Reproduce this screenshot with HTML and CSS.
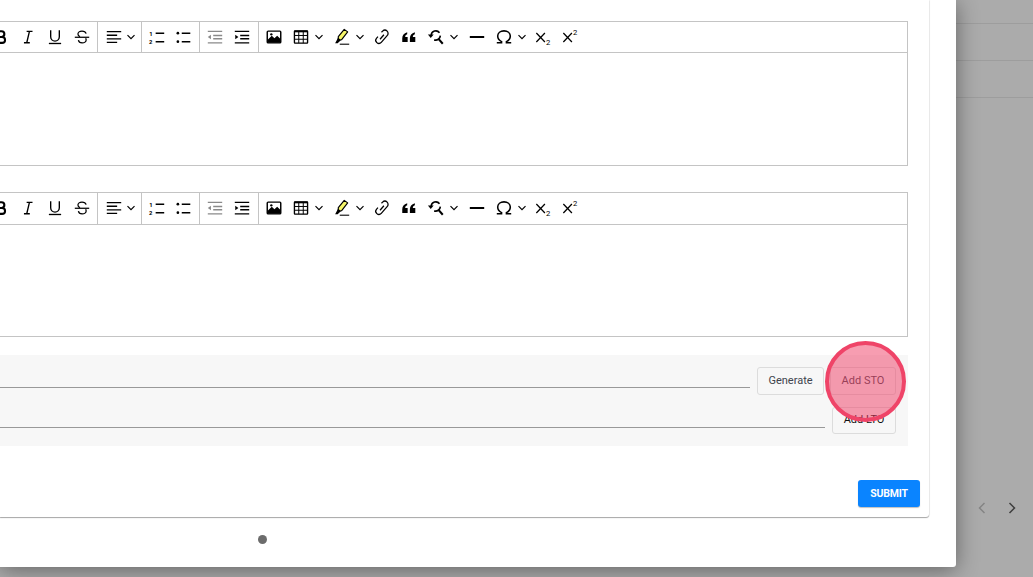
FILE: index.html
```html
<!DOCTYPE html>
<html>

<head>
	<title>Add Goals</title>
	<link rel="stylesheet" href="styles.css">
</head>

<body>
	<!-- icon sprite, both toolbars use it -->
	<svg class="sprite">
		<symbol id="i-bold" viewBox="0 0 20 20"><path d="M6 3.600h4.600a3.100 3.100 0 0 1 0 6.300H6m0 0h5.200a3.300 3.300 0 0 1 0 6.600H6z" fill="none" stroke="currentColor" stroke-width="2.300"/></symbol>
		<symbol id="i-italic" viewBox="0 0 20 20"><path d="M8.500 3.700h6.500M5.500 16.400H12M11.600 3.700L8.600 16.400" fill="none" stroke="currentColor" stroke-width="1.500"/></symbol>
		<symbol id="i-underline" viewBox="0 0 20 20"><path d="M5.200 2.600v7.200a4.800 4.800 0 0 0 9.600 0V2.600" fill="none" stroke="currentColor" stroke-width="1.500"/><path d="M3.200 17.200h13.600" stroke="currentColor" stroke-width="1.500"/></symbol>
		<symbol id="i-strike" viewBox="0 0 20 20"><path d="M14.600 6.300C14 4.300 12.200 3.500 10 3.500c-2.700 0-4.500 1.300-4.500 3.200 0 1.300.8 2.300 2.300 2.900M6 13.400c.4 2 2 3.100 4.100 3.100 2.700 0 4.500-1.300 4.500-3.300 0-.7-.2-1.300-.6-1.800" fill="none" stroke="currentColor" stroke-width="1.400"/><path d="M2 10.300h16" stroke="currentColor" stroke-width="1.400"/></symbol>
		<symbol id="i-align" viewBox="0 0 20 20"><path d="M2 4h16M2 8h11.500M2 12h16M2 16h11.500" stroke="currentColor" stroke-width="1.500"/></symbol>
		<symbol id="i-ol" viewBox="0 0 20 20"><path d="M8.500 5.800h9.500M8.500 15.200h9.500" stroke="currentColor" stroke-width="1.600"/><text x="1.500" y="8.500" class="num">1</text><text x="1.200" y="17.800" class="num">2</text></symbol>
		<symbol id="i-ul" viewBox="0 0 20 20"><path d="M7.500 5.800h9.500M7.500 15.200h9.500" stroke="currentColor" stroke-width="1.600"/><circle cx="3.200" cy="5.800" r="1.500" fill="currentColor"/><circle cx="3.200" cy="15.200" r="1.500" fill="currentColor"/></symbol>
		<symbol id="i-outdent" viewBox="0 0 20 20"><path d="M2 3.700h16M8 8.300h10M8 11.900h10M2 16.500h16" stroke="currentColor" stroke-width="1.500"/><path d="M2 10l3.500-2.400v4.800z" fill="currentColor"/></symbol>
		<symbol id="i-indent" viewBox="0 0 20 20"><path d="M2 3.700h16M8 8.300h10M8 11.900h10M2 16.500h16" stroke="currentColor" stroke-width="1.500"/><path d="M6 10L2.500 7.600v4.800z" fill="currentColor"/></symbol>
		<symbol id="i-image" viewBox="0 0 20 20"><rect x="2.500" y="3.500" width="15" height="13" rx="1" fill="none" stroke="currentColor" stroke-width="1.600"/><path d="M3 16.500v-3.500l4.500-4.500 3 3 3-3 3.500 3.500v4.500z" fill="currentColor"/><circle cx="7" cy="7" r="1.300" fill="currentColor"/></symbol>
		<symbol id="i-table" viewBox="0 0 20 20"><rect x="2.700" y="3.200" width="14.600" height="13.600" rx=".6" fill="none" stroke="currentColor" stroke-width="1.500"/><path d="M2.700 3.800h14.600" stroke="currentColor" stroke-width="2"/><path d="M2.700 8.300h14.600M2.700 12.500h14.600M7.500 4v12.800M12.500 4v12.800" stroke="currentColor" stroke-width="1.100"/></symbol>
		<symbol id="i-pen" viewBox="0 0 20 20"><path d="M12.500 1.500l3.800 2.800-6.900 8.800-3.600.3.100-3.700z" fill="#f6f66a" stroke="currentColor" stroke-width="1.300" stroke-linejoin="round"/><path d="M5.600 10.800l3.300 2.600-3.700 3.600H2.400z" fill="currentColor"/><path d="M7.500 18h10.500" stroke="currentColor" stroke-width="1.200"/></symbol>
		<symbol id="i-link" viewBox="0 0 20 20"><path d="M9.400 4.800l1.300-1.300a3.500 3.500 0 0 1 5 5l-6.500 7.500a3.500 3.500 0 0 1-5.200-4.700l1.500-1.800" fill="none" stroke="currentColor" stroke-width="1.400"/><path d="M7.800 12.500l4.300-5" stroke="currentColor" stroke-width="1.400"/></symbol>
		<symbol id="i-quote" viewBox="0 0 20 20"><path d="M2.500 15.500V11.300C2.500 8 4.300 5.700 8 4.700v2.300C6.500 7.700 5.800 8.600 5.800 10h2.700v5.500zM11 15.500V11.300c0-3.300 1.800-5.600 5.500-6.600V7C15 7.700 14.300 8.600 14.300 10H17v5.500z" fill="currentColor"/></symbol>
		<symbol id="i-find" viewBox="0 0 20 20"><path d="M4.600 8a5.200 5.200 0 0 1 9.300-2.800M14.800 8.500a5.200 5.200 0 0 1-6.800 4.700" fill="none" stroke="currentColor" stroke-width="1.800"/><path d="M13 12.300l4.500 5.200" stroke="currentColor" stroke-width="2.300"/><path d="M1 7.200h6.400l-3.200 3.800z" fill="currentColor"/></symbol>
		<symbol id="i-hr" viewBox="0 0 20 20"><path d="M2 10h16" stroke="currentColor" stroke-width="2.200"/></symbol>
		<symbol id="i-omega" viewBox="0 0 20 20"><path d="M2 16.400h5.300v-1.300C4.500 13.800 3 11.500 3 9c0-3.400 3-5.800 7-5.800s7 2.400 7 5.800c0 2.500-1.500 4.800-4.300 6.100v1.300H18" fill="none" stroke="currentColor" stroke-width="1.700"/></symbol>
		<symbol id="i-sub" viewBox="0 0 20 20"><path d="M1.500 5.500l9.500 10M11 5.500l-9.500 10" stroke="currentColor" stroke-width="1.400"/><text x="12.300" y="19" class="num big">2</text></symbol>
		<symbol id="i-sup" viewBox="0 0 20 20"><path d="M1.500 5.500l9.500 10M11 5.500l-9.500 10" stroke="currentColor" stroke-width="1.400"/><text x="12.300" y="8" class="num big">2</text></symbol>
		<symbol id="i-down" viewBox="0 0 10 10"><path d="M1.500 3.200L5 6.700l3.500-3.500" fill="none" stroke="currentColor" stroke-width="1.200"/></symbol>
	</svg>

	<!-- page behind the dialog -->
	<div class="backdrop">
		<div class="row"></div>
		<div class="row"></div>
		<div class="row"></div>
		<div class="pager">
			<svg class="pager-icon off" viewBox="0 0 10 14"><path d="M7.500 2L2.500 7l5 5" /></svg>
			<svg class="pager-icon" viewBox="0 0 10 14"><path d="M2.500 2l5 5-5 5" /></svg>
		</div>
	</div>

	<div class="modal">
		<div class="card">
			<div class="editor">
				<div class="toolbar">
					<span class="tool"><svg><use href="#i-bold"/></svg></span>
					<span class="tool"><svg><use href="#i-italic"/></svg></span>
					<span class="tool"><svg><use href="#i-underline"/></svg></span>
					<span class="tool"><svg><use href="#i-strike"/></svg></span>
					<span class="sep"></span>
					<span class="tool drop align"><svg><use href="#i-align"/></svg><svg class="chev"><use href="#i-down"/></svg></span>
					<span class="sep"></span>
					<span class="tool"><svg><use href="#i-ol"/></svg></span>
					<span class="tool"><svg><use href="#i-ul"/></svg></span>
					<span class="sep"></span>
					<span class="tool muted"><svg><use href="#i-outdent"/></svg></span>
					<span class="tool"><svg><use href="#i-indent"/></svg></span>
					<span class="sep last"></span>
					<span class="tool"><svg><use href="#i-image"/></svg></span>
					<span class="tool drop"><svg><use href="#i-table"/></svg><svg class="chev"><use href="#i-down"/></svg></span>
					<span class="tool drop"><svg><use href="#i-pen"/></svg><svg class="chev"><use href="#i-down"/></svg></span>
					<span class="tool"><svg><use href="#i-link"/></svg></span>
					<span class="tool"><svg><use href="#i-quote"/></svg></span>
					<span class="tool drop"><svg><use href="#i-find"/></svg><svg class="chev"><use href="#i-down"/></svg></span>
					<span class="tool"><svg><use href="#i-hr"/></svg></span>
					<span class="tool drop"><svg><use href="#i-omega"/></svg><svg class="chev"><use href="#i-down"/></svg></span>
					<span class="tool"><svg><use href="#i-sub"/></svg></span>
					<span class="tool"><svg><use href="#i-sup"/></svg></span>
				</div>
				<div class="editor-body"></div>
			</div>

			<div class="editor second">
				<div class="toolbar">
					<span class="tool"><svg><use href="#i-bold"/></svg></span>
					<span class="tool"><svg><use href="#i-italic"/></svg></span>
					<span class="tool"><svg><use href="#i-underline"/></svg></span>
					<span class="tool"><svg><use href="#i-strike"/></svg></span>
					<span class="sep"></span>
					<span class="tool drop align"><svg><use href="#i-align"/></svg><svg class="chev"><use href="#i-down"/></svg></span>
					<span class="sep"></span>
					<span class="tool"><svg><use href="#i-ol"/></svg></span>
					<span class="tool"><svg><use href="#i-ul"/></svg></span>
					<span class="sep"></span>
					<span class="tool muted"><svg><use href="#i-outdent"/></svg></span>
					<span class="tool"><svg><use href="#i-indent"/></svg></span>
					<span class="sep last"></span>
					<span class="tool"><svg><use href="#i-image"/></svg></span>
					<span class="tool drop"><svg><use href="#i-table"/></svg><svg class="chev"><use href="#i-down"/></svg></span>
					<span class="tool drop"><svg><use href="#i-pen"/></svg><svg class="chev"><use href="#i-down"/></svg></span>
					<span class="tool"><svg><use href="#i-link"/></svg></span>
					<span class="tool"><svg><use href="#i-quote"/></svg></span>
					<span class="tool drop"><svg><use href="#i-find"/></svg><svg class="chev"><use href="#i-down"/></svg></span>
					<span class="tool"><svg><use href="#i-hr"/></svg></span>
					<span class="tool drop"><svg><use href="#i-omega"/></svg><svg class="chev"><use href="#i-down"/></svg></span>
					<span class="tool"><svg><use href="#i-sub"/></svg></span>
					<span class="tool"><svg><use href="#i-sup"/></svg></span>
				</div>
				<div class="editor-body"></div>
			</div>

			<div class="goals">
				<div class="goal-row">
					<div class="goal-input"></div>
					<button class="btn generate">Generate</button>
					<div class="highlight-wrap">
						<button class="btn sto">Add STO</button>
						<div class="click-mark"></div>
					</div>
				</div>
				<div class="goal-row short">
					<div class="goal-input"></div>
					<button class="btn lto">Add LTO</button>
				</div>
			</div>

			<div class="actions">
				<button class="submit">SUBMIT</button>
			</div>
		</div>
		<div class="dots"><span class="dot"></span></div>
	</div>
</body>

</html>
```

FILE: styles.css
```css
body {
	margin: 0;
	height: 577px;
	overflow: hidden;
	background-color: #ababab;
	font-family: Roboto, "Liberation Sans", sans-serif;
}

.sprite {
	display: none;
}

.backdrop {
	padding: 23px 0 0 956px;
}

.row {
	height: 36px;
	border-top: 1px solid #9d9d9d;
}

.pager {
	display: flex;
	justify-content: flex-end;
	gap: 20px;
	margin-top: 367px;
	padding-right: 16px;
}

.pager-icon {
	width: 10px;
	height: 14px;
	fill: none;
	stroke: #3f3f3f;
	stroke-width: 1.5;
}

.pager-icon.off {
	stroke: #848484;
}

/* dialog */
.modal {
	position: absolute;
	top: 0;
	left: 0;
	width: 956px;
	height: 567px;
	background-color: #fff;
	border-radius: 0 0 3px 0;
	box-shadow: 0 3px 22px rgba(0, 0, 0, 0.42);
}

.card {
	box-sizing: border-box;
	width: 929px;
	height: 517px;
	padding-top: 21px;
	background-color: #fff;
	border-radius: 0 0 3px 0;
	box-shadow: 0 1px 1px rgba(0, 0, 0, 0.35), 1px 0 1px rgba(0, 0, 0, 0.06);
}

.editor {
	margin: 0 21px 26px -12.5px;
	border: 1px solid #c4c4c4;
	border-left: 0;
}

.editor.second {
	margin-bottom: 18px;
}

.toolbar {
	display: flex;
	height: 30px;
	border-bottom: 1px solid #c4c4c4;
	color: #000;
}

.second .toolbar {
	height: 31px;
}

.tool {
	display: flex;
	align-items: center;
	flex: none;
	width: 27px;
	height: 30px;
	padding-left: 4.5px;
	box-sizing: border-box;
}

.tool svg {
	width: 18px;
	height: 18px;
	flex: none;
}

.tool.drop {
	width: 40.5px;
}

/* the align button sits a bit tighter than the other dropdowns */
.tool.align {
	width: 39.5px;
	padding-left: 5px;
}

.tool.align .chev {
	margin-left: 3.5px;
}

.tool .chev {
	width: 10px;
	height: 10px;
	margin-left: 4px;
}

.tool.muted {
	color: #8a8a8a;
}

.num {
	font-family: Roboto, sans-serif;
	font-size: 6.5px;
	font-weight: 700;
	fill: currentColor;
}

.num.big {
	font-size: 8.5px;
	font-weight: 400;
}

.sep {
	flex: none;
	width: 1px;
	margin: 0 1.5px;
	background-color: #c4c4c4;
}

.sep.last {
	margin: 0 2px 0 2.5px;
}

.editor-body {
	height: 112px;
}

.second .editor-body {
	height: 111px;
}

/* STO / LTO panel */
.goals {
	display: flex;
	flex-direction: column;
	gap: 12px;
	margin-right: 21px;
	padding: 12px;
	padding-left: 0;
	background-color: #f7f7f7;
}

.goal-row {
	display: flex;
	height: 28px;
}

.goal-row.short {
	height: 27px;
}

.goal-input {
	flex: 1;
	height: 20px;
	border-bottom: 1px solid #999;
	margin-right: 7px;
}

.btn {
	box-sizing: border-box;
	height: 100%;
	padding: 0 0 2px;
	background-color: #f7f7f7;
	border: 1px solid #dcdcdc;
	border-radius: 3px;
	font-family: inherit;
	font-size: 11px;
	color: #40444d;
}

.generate {
	width: 67px;
}

.highlight-wrap {
	position: relative;
	margin-left: 6px;
}

.sto {
	width: 66px;
}

.lto {
	width: 64px;
	color: #111;
}

.click-mark {
	position: absolute;
	top: -26px;
	left: -5px;
	box-sizing: border-box;
	width: 81px;
	height: 81px;
	border: 4px solid #ef4468;
	border-radius: 50%;
	background-color: rgba(240, 60, 100, 0.5);
}

.actions {
	display: flex;
	justify-content: flex-end;
	padding: 34px 9px 0 0;
}

.submit {
	width: 62px;
	height: 27px;
	padding: 0 0 1px;
	background-color: #0a84ff;
	border: 0;
	border-radius: 3px;
	box-shadow: 0 1px 1px rgba(0, 0, 0, 0.25);
	font-family: inherit;
	font-size: 10.5px;
	font-weight: 700;
	letter-spacing: -0.2px;
	color: #fff;
}

.dots {
	display: flex;
	padding: 18px 0 0 258px;
}

.dot {
	width: 9px;
	height: 9px;
	border-radius: 50%;
	background-color: #6c6c6c;
}
```
